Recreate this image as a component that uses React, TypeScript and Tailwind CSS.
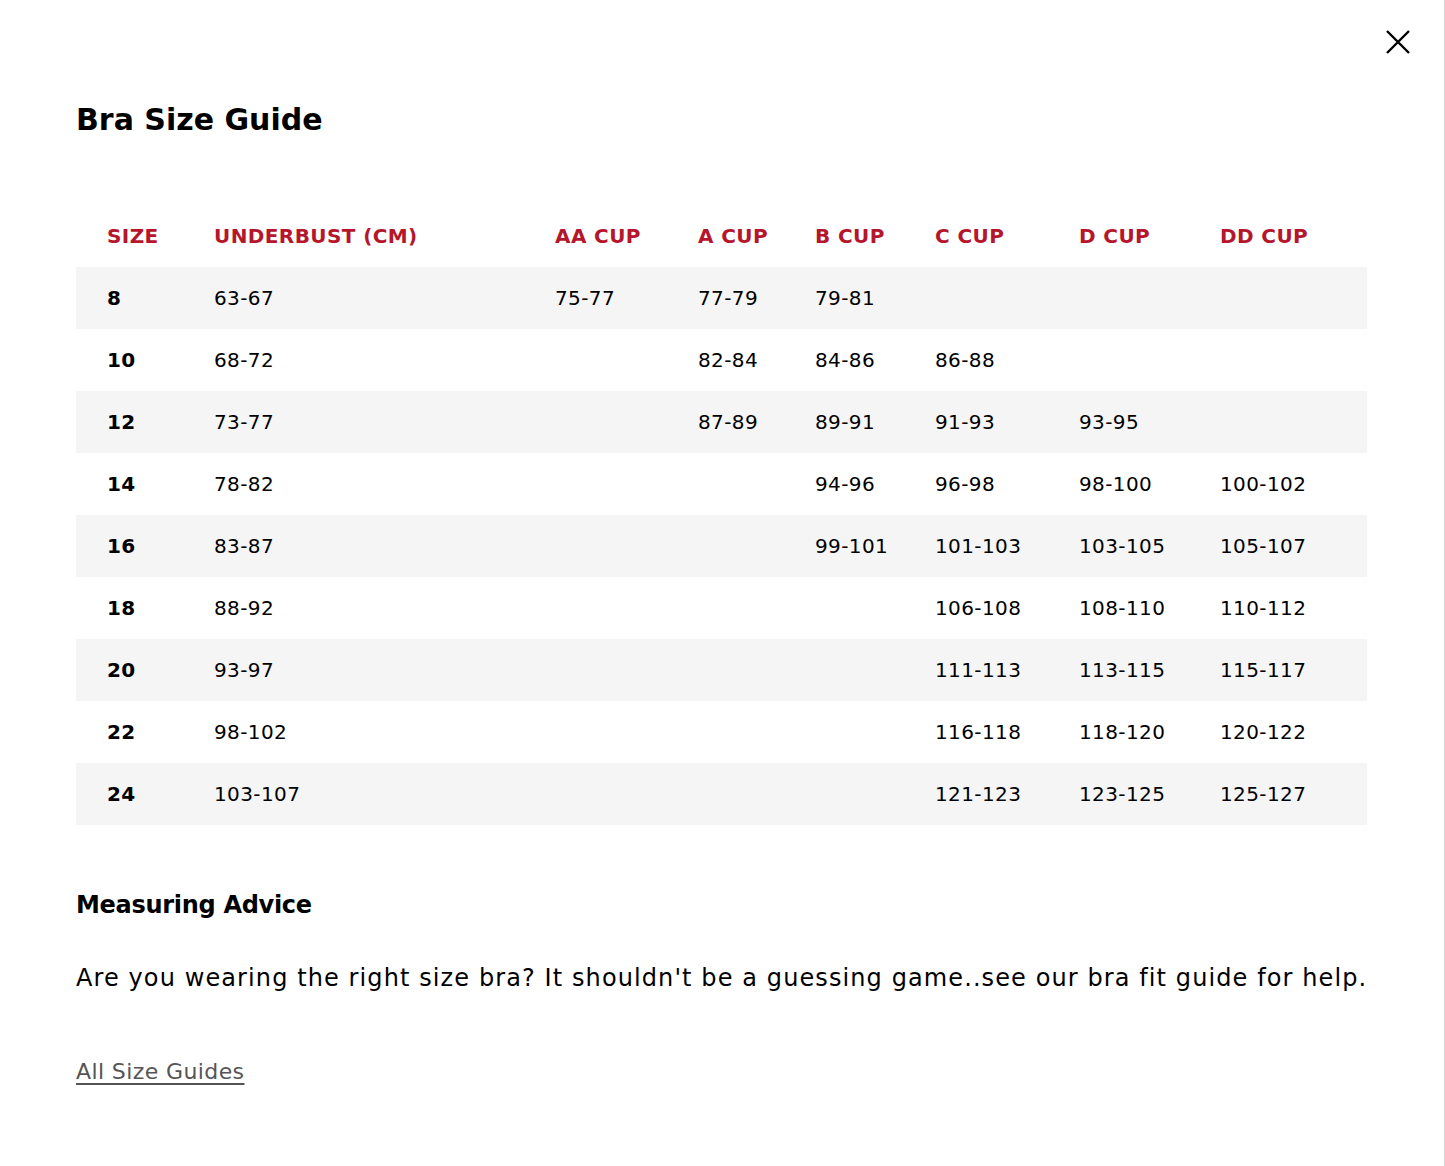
const rows: string[][] = [
  ["8", "63-67", "75-77", "77-79", "79-81", "", "", ""],
  ["10", "68-72", "", "82-84", "84-86", "86-88", "", ""],
  ["12", "73-77", "", "87-89", "89-91", "91-93", "93-95", ""],
  ["14", "78-82", "", "", "94-96", "96-98", "98-100", "100-102"],
  ["16", "83-87", "", "", "99-101", "101-103", "103-105", "105-107"],
  ["18", "88-92", "", "", "", "106-108", "108-110", "110-112"],
  ["20", "93-97", "", "", "", "111-113", "113-115", "115-117"],
  ["22", "98-102", "", "", "", "116-118", "118-120", "120-122"],
  ["24", "103-107", "", "", "", "121-123", "123-125", "125-127"],
];

const headers = ["SIZE", "UNDERBUST (CM)", "AA CUP", "A CUP", "B CUP", "C CUP", "D CUP", "DD CUP"];
const widths = ["w-[138px]", "w-[341px]", "w-[143px]", "w-[117px]", "w-[120px]", "w-[144px]", "w-[141px]", "w-[147px]"];

export default function App() {
  return (
    <div className="min-h-[1166px] w-[1445px] bg-white border-r border-[#d4d4d4] text-black font-['DejaVu_Sans',sans-serif]">
      <div className="relative px-[76px] pt-[98px] pb-[80px] w-[1444px]">
        <button className="absolute left-[1386px] top-[30px] text-black">
          <svg width="24" height="24" viewBox="0 0 24 24" fill="none" stroke="currentColor" strokeWidth="2.4">
            <path d="M1 1L23 23M23 1L1 23" />
          </svg>
        </button>

        <h1 className="text-[30px] font-bold leading-[44px]">Bra Size Guide</h1>

        <table className="mt-[67px] table-fixed border-collapse w-[1291px]">
          <thead>
            <tr className="h-[58px]">
              {headers.map((h, i) => (
                <th
                  key={h}
                  className={`${widths[i]} ${i === 0 ? "pl-[31px]" : ""} text-left align-middle text-[20px] tracking-[0.4px] font-bold text-[#b5162b] pb-[4px]`}
                >
                  {h}
                </th>
              ))}
            </tr>
          </thead>
          <tbody>
            {rows.map((r, ri) => (
              <tr key={r[0]} className={`h-[62px] ${ri % 2 === 0 ? "bg-[#f5f5f5]" : "bg-white"}`}>
                {r.map((c, ci) => (
                  <td
                    key={ci}
                    className={`${ci === 0 ? "pl-[31px] font-bold" : ""} align-middle text-[20px] tracking-[0.4px]`}
                  >
                    {c}
                  </td>
                ))}
              </tr>
            ))}
          </tbody>
        </table>

        <h2 className="mt-[62px] text-[24px] tracking-[-0.3px] font-bold leading-[36px]">Measuring Advice</h2>
        <p className="mt-[37px] text-[24px] tracking-[1.1px] leading-[36px]">
          Are you wearing the right size bra? It shouldn't be a guessing game..see our bra fit guide for help.
        </p>
        <a href="#" className="mt-[59px] inline-block text-[22px] tracking-[0.4px] text-[#555] underline underline-offset-4">
          All Size Guides
        </a>
      </div>
    </div>
  );
}
